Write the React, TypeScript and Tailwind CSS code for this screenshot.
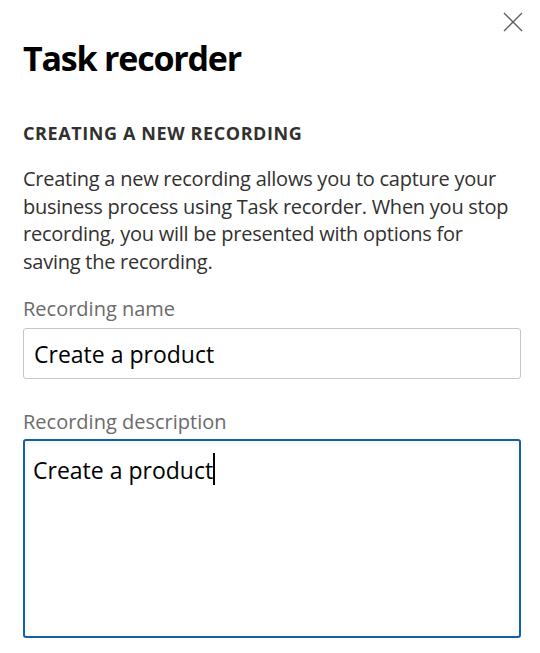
import React from 'react';

/**
 * Close glyph for the side panel.
 */
const CloseIcon = () => (
  <svg viewBox="0 0 20 20" className="h-5 w-5" fill="none" stroke="#5c5c5c" strokeWidth="1.3">
    <path d="M1 1L19 19M19 1L1 19" />
  </svg>
);

const TaskRecorderPanel = () => {
  return (
    <div
      className="w-[540px] h-[653px] bg-white pl-[23px] pr-[19px] pt-[12px] text-black overflow-hidden"
      style={{ fontFamily: '"Open Sans", "Noto Sans", sans-serif' }}
    >
      <div className="flex justify-end">
        <button className="mr-[-2px]">
          <CloseIcon />
        </button>
      </div>
      <h1 className="mt-[6px] text-[34px] font-bold leading-[40px] tracking-[-1.2px]">Task recorder</h1>

      <h2 className="mt-[43px] text-[18px] font-bold leading-[24px] text-[#323130] tracking-[0.6px]">
        CREATING A NEW RECORDING
      </h2>

      <p className="mt-[20px] text-[20px] leading-[27.5px] text-[#323130] tracking-[-0.25px]">
        Creating a new recording allows you to capture your business process using Task recorder. When you stop
        recording, you will be presented with options for saving the recording.
      </p>

      <label className="mt-[20px] block text-[20px] leading-[27.5px] text-[#6b6b6b]">Recording name</label>
      <div className="mt-[5px] flex h-[51px] items-center rounded-[3px] border border-[#c8c6c4] pl-[10px] pt-[2px]">
        <span className="text-[23px]">Create a product</span>
      </div>

      <label className="mt-[29px] block text-[20px] leading-[27.5px] text-[#6b6b6b]">Recording description</label>
      <div className="mt-[4px] h-[199px] rounded-[3px] border-2 border-[#1160aa] pl-[8px] pt-[14px] shadow-[inset_0_2px_6px_rgba(0,0,0,0.06)]">
        <div className="flex items-start">
          <span className="text-[23px] leading-[30px]">Create a product</span>
          <span className="mt-[-2px] h-[32px] w-[2px] bg-black" />
        </div>
      </div>
    </div>
  );
};

export default TaskRecorderPanel;
